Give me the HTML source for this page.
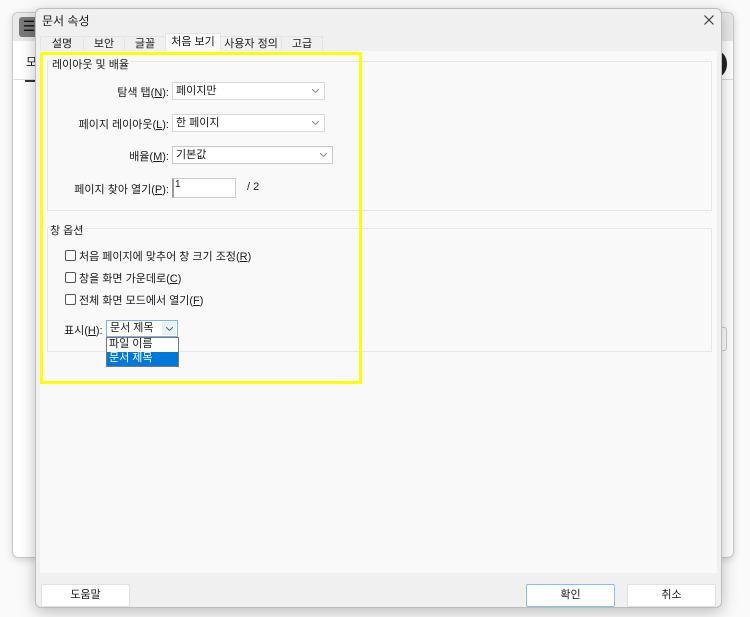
<!DOCTYPE html>
<html><head><meta charset="utf-8"><style>
*{box-sizing:border-box;margin:0;padding:0}
body{width:750px;height:617px;background:#fafafa;position:relative;overflow:hidden;font-family:"Liberation Sans","Noto Sans CJK KR",sans-serif;font-size:11px;color:#1a1a1a}
.a{position:absolute}
.bg{left:12px;top:12px;width:722px;height:546px;background:#fff;border:1px solid #c8c8c8;border-radius:6px;box-shadow:0 2px 8px rgba(0,0,0,.15);overflow:hidden}
.dlg{left:35px;top:8px;width:687px;height:600px;background:#f0f0f0;border:1px solid #bdbdbd;border-radius:6px;box-shadow:0 4px 16px rgba(0,0,0,.25);overflow:hidden}
.tab{top:27px;height:16px;background:#f0f0f0;border:1px solid #e3e3e3;border-bottom:none;text-align:center;line-height:15px;font-size:11px}
.grp{border:1px solid #e6e6e6;background:#f9f9f9}
.cb{background:#fff;border:1px solid #d9d9d9;height:18px;line-height:16px;padding-left:3px;font-size:11px}
.cb svg{position:absolute;right:5px;top:6px}
.lbl{text-align:right;width:160px;font-size:11px}
.chk{width:11px;height:11px;border:1px solid #555;border-radius:2px;background:#fff}
.btn{height:23px;background:#fff;border:1px solid #e0e0e0;border-radius:2px;text-align:center;line-height:21px;font-size:11px}
u{text-decoration:underline}
</style></head><body>
<div class="a bg">
 <div class="a" style="left:0;top:0;width:722px;height:28px;background:#e9e9e9"></div>
 <div class="a" style="left:6px;top:4px;width:20px;height:20px;background:#7a7a7a;border-radius:3px;color:#111;font-size:14px;text-align:center;line-height:19px">☰</div>
 <div class="a" style="left:13px;top:40px;font-size:12px">모</div>
 <div class="a" style="left:0;top:66px;width:722px;height:1px;background:#ddd"></div>
 <div class="a" style="left:12px;top:67px;width:12px;height:2px;background:#333"></div>
 <div class="a" style="left:694px;top:38px;width:20px;height:26px;background:#222;border-radius:50%"></div>
 <div class="a" style="left:700px;top:314px;width:14px;height:24px;border:1px solid #ccc;border-radius:3px"></div>
</div>
<div class="a dlg">
 <div class="a" style="left:6px;top:3px;font-size:12px">문서 속성</div>
 <svg class="a" style="left:668px;top:6px" width="10" height="10"><path d="M0.5 0.5L9.5 9.5M9.5 0.5L0.5 9.5" stroke="#333" stroke-width="1.1"/></svg>
 <div class="a tab" style="left:4px;width:44px">설명</div>
 <div class="a tab" style="left:47px;width:42px">보안</div>
 <div class="a tab" style="left:88px;width:42px">글꼴</div>
 <div class="a tab" style="left:129px;top:24px;height:19px;width:56px;background:#f9f9f9;line-height:16px">처음 보기</div>
 <div class="a tab" style="left:184px;width:62px">사용자 정의</div>
 <div class="a tab" style="left:245px;width:42px">고급</div>
 <div class="a" style="left:4px;top:42px;width:677px;height:522px;background:#f9f9f9"></div>
 <div class="a grp" style="left:11px;top:52px;width:665px;height:150px"></div>
 <div class="a" style="left:14px;top:47px;background:#f9f9f9;padding:0 2px">레이아웃 및 배율</div>
 <div class="a lbl" style="left:-27px;top:75px">탐색 탭(<u>N</u>):</div>
 <div class="a cb" style="left:136px;top:73px;width:153px">페이지만<svg width="7" height="4"><path d="M0 0L3.5 3.5L7 0" stroke="#888" fill="none"/></svg></div>
 <div class="a lbl" style="left:-27px;top:107px">페이지 레이아웃(<u>L</u>):</div>
 <div class="a cb" style="left:136px;top:105px;width:153px">한 페이지<svg width="7" height="4"><path d="M0 0L3.5 3.5L7 0" stroke="#888" fill="none"/></svg></div>
 <div class="a lbl" style="left:-27px;top:139px">배율(<u>M</u>):</div>
 <div class="a cb" style="left:136px;top:137px;width:161px;border-color:#c9c9c9">기본값<svg width="7" height="4"><path d="M0 0L3.5 3.5L7 0" stroke="#888" fill="none"/></svg></div>
 <div class="a lbl" style="left:-27px;top:172px">페이지 찾아 열기(<u>P</u>):</div>
 <div class="a" style="left:136px;top:169px;width:64px;height:20px;background:#fff;border:1px solid #ccc;border-left:2px solid #999;padding-left:1px;font-size:10px">1</div>
 <div class="a" style="left:211px;top:172px">/ 2</div>
 <div class="a grp" style="left:11px;top:219px;width:665px;height:124px"></div>
 <div class="a" style="left:12px;top:213px;background:#f9f9f9;padding:0 2px">창 옵션</div>
 <div class="a chk" style="left:29px;top:241px"></div><div class="a" style="left:43px;top:239px">처음 페이지에 맞추어 창 크기 조정(<u>R</u>)</div>
 <div class="a chk" style="left:29px;top:263px"></div><div class="a" style="left:43px;top:261px">창을 화면 가운데로(<u>C</u>)</div>
 <div class="a chk" style="left:29px;top:285px"></div><div class="a" style="left:43px;top:283px">전체 화면 모드에서 열기(<u>F</u>)</div>
 <div class="a" style="left:28px;top:313px">표시(<u>H</u>):</div>
 <div class="a cb" style="left:70px;top:311px;width:72px;border-color:#7fb2e0;height:17px;line-height:15px">문서 제목<div class="a" style="right:1px;top:1px;width:14px;height:13px;background:#e5f1fb"></div><svg width="7" height="4" style="right:4px;top:6px"><path d="M0 0L3.5 3.5L7 0" stroke="#666" fill="none"/></svg></div>
 <div class="a" style="left:70px;top:328px;width:73px;height:30px;background:#fff;border:1px solid #777">
  <div style="height:14px;line-height:13px;padding-left:2px">파일 이름</div>
  <div style="height:14px;line-height:13px;padding-left:2px;background:#0078d7;color:#fff">문서 제목</div>
 </div>
 <div class="a btn" style="left:5px;top:575px;width:89px">도움말</div>
 <div class="a btn" style="left:490px;top:575px;width:89px;border-color:#8cbde8">확인</div>
 <div class="a btn" style="left:591px;top:575px;width:89px">취소</div>
</div>
<div class="a" style="left:40px;top:52px;width:322px;height:332px;border:3px solid #ffff00"></div>
</body></html>
